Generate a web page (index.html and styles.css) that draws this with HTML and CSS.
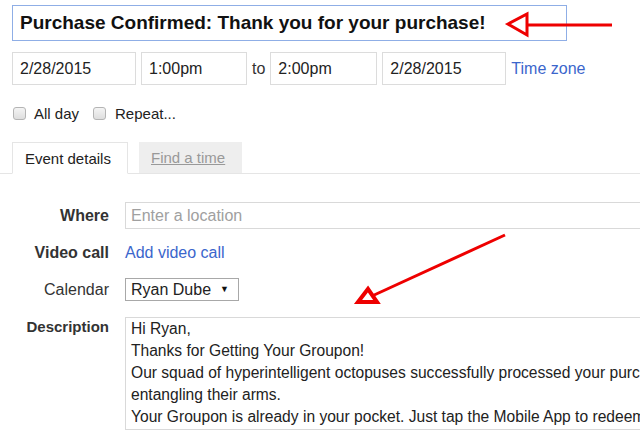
FILE: index.html
```html
<!DOCTYPE html>
<html>
<head>
<meta charset="utf-8">
<link rel="stylesheet" href="styles.css">
</head>
<body>
<div class="page">
  <div class="title-box">Purchase Confirmed: Thank you for your purchase!</div>

  <div class="date-row">
    <div class="field w124">2/28/2015</div>
    <div class="field w106">1:00pm</div>
    <span class="to">to</span>
    <div class="field w107">2:00pm</div>
    <div class="field w124">2/28/2015</div>
    <a class="link tz">Time zone</a>
  </div>

  <div class="check-row">
    <span class="cb"></span><span class="cb-label">All day</span>
    <span class="cb"></span><span class="cb-label">Repeat...</span>
  </div>

  <div class="tabs">
    <div class="tab active">Event details</div>
    <div class="tab inactive"><span>Find a time</span></div>
  </div>

  <div class="form">
    <div class="row r-where">
      <div class="label bold">Where</div>
      <div class="input where">Enter a location</div>
    </div>
    <div class="row r-video">
      <div class="label bold">Video call</div>
      <a class="link">Add video call</a>
    </div>
    <div class="row r-cal">
      <div class="label">Calendar</div>
      <div class="select">Ryan Dube <span class="caret">&#9660;</span></div>
    </div>
    <div class="row r-desc">
      <div class="label desc-label">Description</div>
      <div class="textarea">
        <div>Hi Ryan,</div>
        <div>Thanks for Getting Your Groupon!</div>
        <div>Our squad of hyperintelligent octopuses successfully processed your purchase without</div>
        <div>entangling their arms.</div>
        <div>Your Groupon is already in your pocket. Just tap the Mobile App to redeem it.</div>
      </div>
    </div>
  </div>

  <svg class="annot" width="640" height="430" viewBox="0 0 640 430">
    <g fill="none" stroke="#ee0000" stroke-linejoin="miter">
      <line x1="527" y1="25" x2="612" y2="25" stroke-width="3"/>
      <polygon points="508,24 527,14 527,35" stroke-width="3"/>
      <line x1="505" y1="235" x2="372" y2="296" stroke-width="3"/>
      <polygon points="358,302 368,289 377,302" stroke-width="4"/>
    </g>
  </svg>
</div>
</body>
</html>
```

FILE: styles.css
```css
* { box-sizing: border-box; }
html, body { margin: 0; padding: 0; background: #fff; }
body {
  font-family: Arial, "Liberation Sans", sans-serif;
  font-size: 16px;
  color: #222;
  width: 640px;
  height: 430px;
  overflow: hidden;
}
.page { position: relative; width: 640px; height: 430px; padding-top: 5px; overflow: hidden; }

.title-box {
  margin-left: 12px;
  width: 555px;
  height: 36px;
  border: 1px solid #8faee6;
  font-weight: bold;
  font-size: 19px;
  color: #111;
  padding-left: 7px;
  line-height: 34px;
  white-space: nowrap;
}

.date-row {
  display: flex;
  align-items: center;
  margin-top: 11px;
  margin-left: 12px;
  height: 33px;
  gap: 5px;
}
.field {
  height: 33px;
  border: 1px solid #dcdcdc;
  line-height: 31px;
  padding-left: 7px;
  color: #222;
}
.w124 { width: 124px; }
.w106 { width: 106px; }
.w107 { width: 107px; }
.to { color: #333; }
.link { color: #3b66cc; text-decoration: none; }

.check-row {
  display: flex;
  align-items: center;
  margin-top: 21px;
  margin-left: 13px;
  height: 14px;
  font-size: 15px;
}
.cb {
  width: 13px;
  height: 13px;
  border: 1px solid #b4b4b4;
  border-radius: 3px;
  background: linear-gradient(#f4f4f4, #dedede);
}
.cb-label { margin-left: 8px; margin-right: 14px; color: #222; }
.cb-label + .cb + .cb-label { margin-left: 9px; }

.tabs {
  display: flex;
  gap: 11px;
  margin-top: 22px;
  padding-left: 12px;
  height: 32px;
  border-bottom: 1px solid #e5e5e5;
  font-size: 15px;
}
.tab {
  height: 32px;
  line-height: 31px;
  padding-left: 12px;
}
.tab.active {
  width: 116px;
  border: 1px solid #e5e5e5;
  border-bottom: 1px solid #fff;
  margin-bottom: -1px;
  background: #fff;
  color: #222;
}
.tab.inactive {
  width: 103px;
  background: #eeeeee;
  color: #999;
  height: 31px;
}
.tab.inactive span { text-decoration: underline; }

.form { margin-top: 28px; }
.row {
  display: grid;
  grid-template-columns: 109px 1fr;
  column-gap: 16px;
  align-items: center;
}
.label { text-align: right; color: #333; white-space: nowrap; }
.bold { font-weight: bold; }
.input.where {
  height: 27px;
  border: 1px solid #d9d9d9;
  border-right: none;
  color: #a0a0a0;
  line-height: 25px;
  padding-left: 5px;
}
.r-video { margin-top: 12px; height: 24px; }
.r-cal { margin-top: 13px; }
.select {
  width: 114px;
  height: 23px;
  border: 1px solid #a8a8a8;
  line-height: 21px;
  padding-left: 5px;
  color: #222;
  position: relative;
}
.caret {
  position: absolute;
  right: 9px;
  top: 0;
  font-size: 9px;
  color: #111;
}
.r-desc { margin-top: 16px; align-items: start; }
.desc-label { font-weight: bold; font-size: 15px; padding-top: 1px; }
.textarea {
  border: 1px solid #d9d9d9;
  border-right: none;
  height: 113px;
  padding: 0 0 0 5px;
  font-size: 15.6px;
  line-height: 22px;
  white-space: nowrap;
  overflow: hidden;
  color: #222;
}

.annot { position: absolute; left: 0; top: 0; pointer-events: none; }
```
